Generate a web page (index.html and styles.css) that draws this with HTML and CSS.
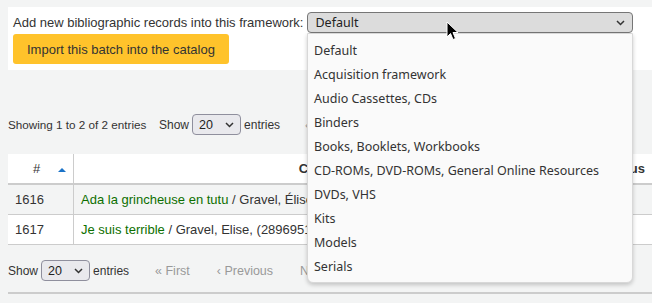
FILE: index.html
```html
<!DOCTYPE html>
<html>
<head>
    <title>Stage records</title>
    <link rel="stylesheet" href="styles.css">
</head>
<body>
    <div class="panel">
        <div class="framework-row">
            <label class="framework-label">Add new bibliographic records into this framework:</label>
            <div class="fake-select framework-select">
                <span>Default</span>
                <svg class="chevron" width="9" height="6" viewBox="0 0 9 6"><path d="M1 1 L4.5 4.5 L8 1" fill="none" stroke="#333" stroke-width="1.5"/></svg>
            </div>
        </div>
        <button type="button" class="import-btn">Import this batch into the catalog</button>
    </div>

    <div class="table-info">
        <span class="showing">Showing 1 to 2 of 2 entries</span>
        <span class="length">Show
            <span class="fake-select small-select"><span>20</span><svg class="chevron" width="9" height="6" viewBox="0 0 9 6"><path d="M1 1 L4.5 4.5 L8 1" fill="none" stroke="#333" stroke-width="1.5"/></svg></span>
            entries</span>
        <span class="pager-top">‹</span>
    </div>

    <table class="records">
        <thead>
            <tr>
                <th class="col-num"># <span class="sort-up"></span></th>
                <th class="col-citation">Citation</th>
                <th class="col-status">Status</th>
            </tr>
        </thead>
        <tbody>
            <tr class="odd">
                <td>1616</td>
                <td><a href="#">Ada la grincheuse en tutu</a> / Gravel, Élise, (2896951</td>
                <td></td>
            </tr>
            <tr>
                <td>1617</td>
                <td><a href="#">Je suis terrible</a> / Gravel, Elise, (2896951</td>
                <td></td>
            </tr>
        </tbody>
    </table>

    <div class="table-bottom">
        <span class="length">Show
            <span class="fake-select small-select"><span>20</span><svg class="chevron" width="9" height="6" viewBox="0 0 9 6"><path d="M1 1 L4.5 4.5 L8 1" fill="none" stroke="#333" stroke-width="1.5"/></svg></span>
            entries</span>
        <span class="pager"><span>« First</span><span>‹ Previous</span><span>Next ›</span></span>
    </div>
    <div class="bottom-line"></div>

    <!-- open framework dropdown -->
    <ul class="dropdown">
        <li>Default</li>
        <li>Acquisition framework</li>
        <li>Audio Cassettes, CDs</li>
        <li>Binders</li>
        <li>Books, Booklets, Workbooks</li>
        <li>CD-ROMs, DVD-ROMs, General Online Resources</li>
        <li>DVDs, VHS</li>
        <li>Kits</li>
        <li>Models</li>
        <li>Serials</li>
    </ul>

    <svg class="cursor" width="13" height="20" viewBox="0 0 13 20">
        <path d="M1 1 L1 16 L4.5 12.5 L7 18.5 L9.5 17.5 L7 11.5 L12 11.5 Z" fill="#000" stroke="#fff" stroke-width="1"/>
    </svg>
</body>
</html>
```

FILE: styles.css
```css
body {
    margin: 0;
    background-color: #f3f4f4;
    font-family: "Liberation Sans", Arial, sans-serif;
    font-size: 13px;
    color: #333;
    overflow: hidden;
}
.panel {
    margin: 7px 0 0 8px;
    padding: 5px 5px 7px 5px;
    background-color: #fff;
    height: 51px;
}
.framework-row {
    display: flex;
    align-items: center;
    gap: 4px;
    height: 21px;
}
.framework-label {
    font-size: 13px;
}
.fake-select {
    display: inline-flex;
    align-items: center;
    justify-content: space-between;
    box-sizing: border-box;
    border: 1px solid #767676;
    border-radius: 4px;
    background-color: #dcdcdc;
    color: #222;
}
.framework-select {
    width: 326px;
    height: 21px;
    padding: 0 7px 0 7px;
    font-family: "Noto Sans", sans-serif;
    font-size: 12.5px;
}
.import-btn {
    margin-top: 1px;
    height: 30px;
    padding: 0 14px;
    background-color: #ffc32b;
    border: none;
    border-radius: 3px;
    font-family: "Liberation Sans", Arial, sans-serif;
    font-size: 13px;
    color: #333;
}
.table-info {
    display: flex;
    align-items: center;
    margin: 44px 0 0 8px;
    height: 21px;
    font-size: 11.7px;
}
.showing {
    width: 151px;
}
.length {
    display: inline-flex;
    align-items: center;
    gap: 3px;
    font-size: 12px;
}
.small-select {
    width: 49px;
    height: 21px;
    padding: 0 6px;
    background-color: #e9e9ed;
    border-color: #8f8f9d;
    font-size: 12.5px;
}
.pager-top {
    margin-left: 25px;
    color: #999;
}
.records {
    margin: 19px 0 0 8px;
    width: 660px;
    border-collapse: collapse;
    background-color: #fff;
}
.records th {
    height: 29px;
    padding: 0 8px;
    border-bottom: 2px solid #ccc;
    font-weight: bold;
    white-space: nowrap;
}
.records th + th,
.records td + td {
    border-left: 1px solid #ccc;
}
.col-num {
    width: 33px;
    text-align: left;
    padding: 0 7px 0 25px !important;
    font-weight: normal !important;
}
.col-citation {
    width: 482px;
}
.col-status {
    text-align: right;
    padding-right: 23px !important;
}
.sort-up {
    display: inline-block;
    margin-left: 14px;
    vertical-align: middle;
    border-left: 4px solid transparent;
    border-right: 4px solid transparent;
    border-bottom: 4px solid #1a73c8;
}
.records td {
    height: 29px;
    padding: 0 7px;
    border-bottom: 1px solid #ccc;
    white-space: nowrap;
}
.records tr.odd td {
    background-color: #f3f4f4;
}
.records a {
    color: #0d6f00;
    text-decoration: none;
}
.table-bottom {
    display: flex;
    align-items: center;
    margin: 15px 0 0 8px;
    height: 21px;
}
.pager {
    display: flex;
    gap: 27px;
    margin-left: 26px;
    color: #999;
    font-size: 12.5px;
}
.bottom-line {
    margin: 11px 0 0 8px;
    border-top: 2px solid #ccc;
}
.dropdown {
    position: absolute;
    left: 307px;
    top: 33px;
    width: 326px;
    height: 250px;
    box-sizing: border-box;
    margin: 0;
    padding: 5px 0 0 0;
    list-style: none;
    background-color: #fafafa;
    border: 1px solid #d8d8d8;
    border-radius: 0 0 6px 6px;
    box-shadow: 0 2px 4px rgba(0, 0, 0, 0.2);
    font-family: "Noto Sans", sans-serif;
    font-size: 12.5px;
    color: #333;
}
.dropdown li {
    height: 24px;
    line-height: 24px;
    padding-left: 6px;
}
.cursor {
    position: absolute;
    left: 446px;
    top: 21px;
}
```
